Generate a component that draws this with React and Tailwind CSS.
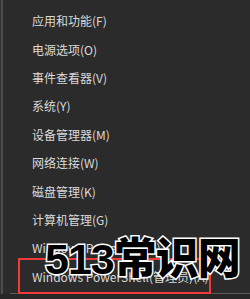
const items = [
  "应用和功能(F)",
  "电源选项(O)",
  "事件查看器(V)",
  "系统(Y)",
  "设备管理器(M)",
  "网络连接(W)",
  "磁盘管理(K)",
  "计算机管理(G)",
  "Windows PowerShell(I)",
  "Windows PowerShell(管理员)(A)",
];

export default function App() {
  return (
    <div className="relative w-[250px] h-[299px] overflow-hidden bg-[#2b2b2b]" style={{ fontFamily: '"Noto Sans CJK SC", "Noto Sans", sans-serif' }}>
      <div className="flex h-full">
        <div className="w-[1px] bg-[#333333]" />
        <div className="w-[2px] bg-[#4d4d4d]" />
        <div className="flex-1 flex flex-col pt-[7px]">
          {items.map((t) => (
            <div key={t} className="h-[28.4px] flex items-center pl-[29px] text-[12px] text-[#dadada] whitespace-nowrap">
              {t}
            </div>
          ))}
        </div>
      </div>

      {/* bottom separator */}
      <div className="absolute left-[10px] right-0 top-[293px] h-[1px] bg-[#5a5a5a]" />
      <div className="absolute left-0 right-0 top-[294px] bottom-0 bg-[#262626]" />

      {/* red highlight box */}
      <div className="absolute left-[18px] top-[258px] w-[193px] h-[36px] border-2 border-[#f03a3a]" />

      {/* watermark */}
      <div
        className="absolute left-[45px] top-[238px] text-[43px] font-black leading-none text-black whitespace-nowrap tracking-[-1px]"
        style={{ WebkitTextStroke: "3px white", paintOrder: "stroke fill", fontFamily: '"Liberation Sans", "Noto Sans CJK SC", sans-serif' }}
      >
        513常识网
      </div>
    </div>
  );
}
